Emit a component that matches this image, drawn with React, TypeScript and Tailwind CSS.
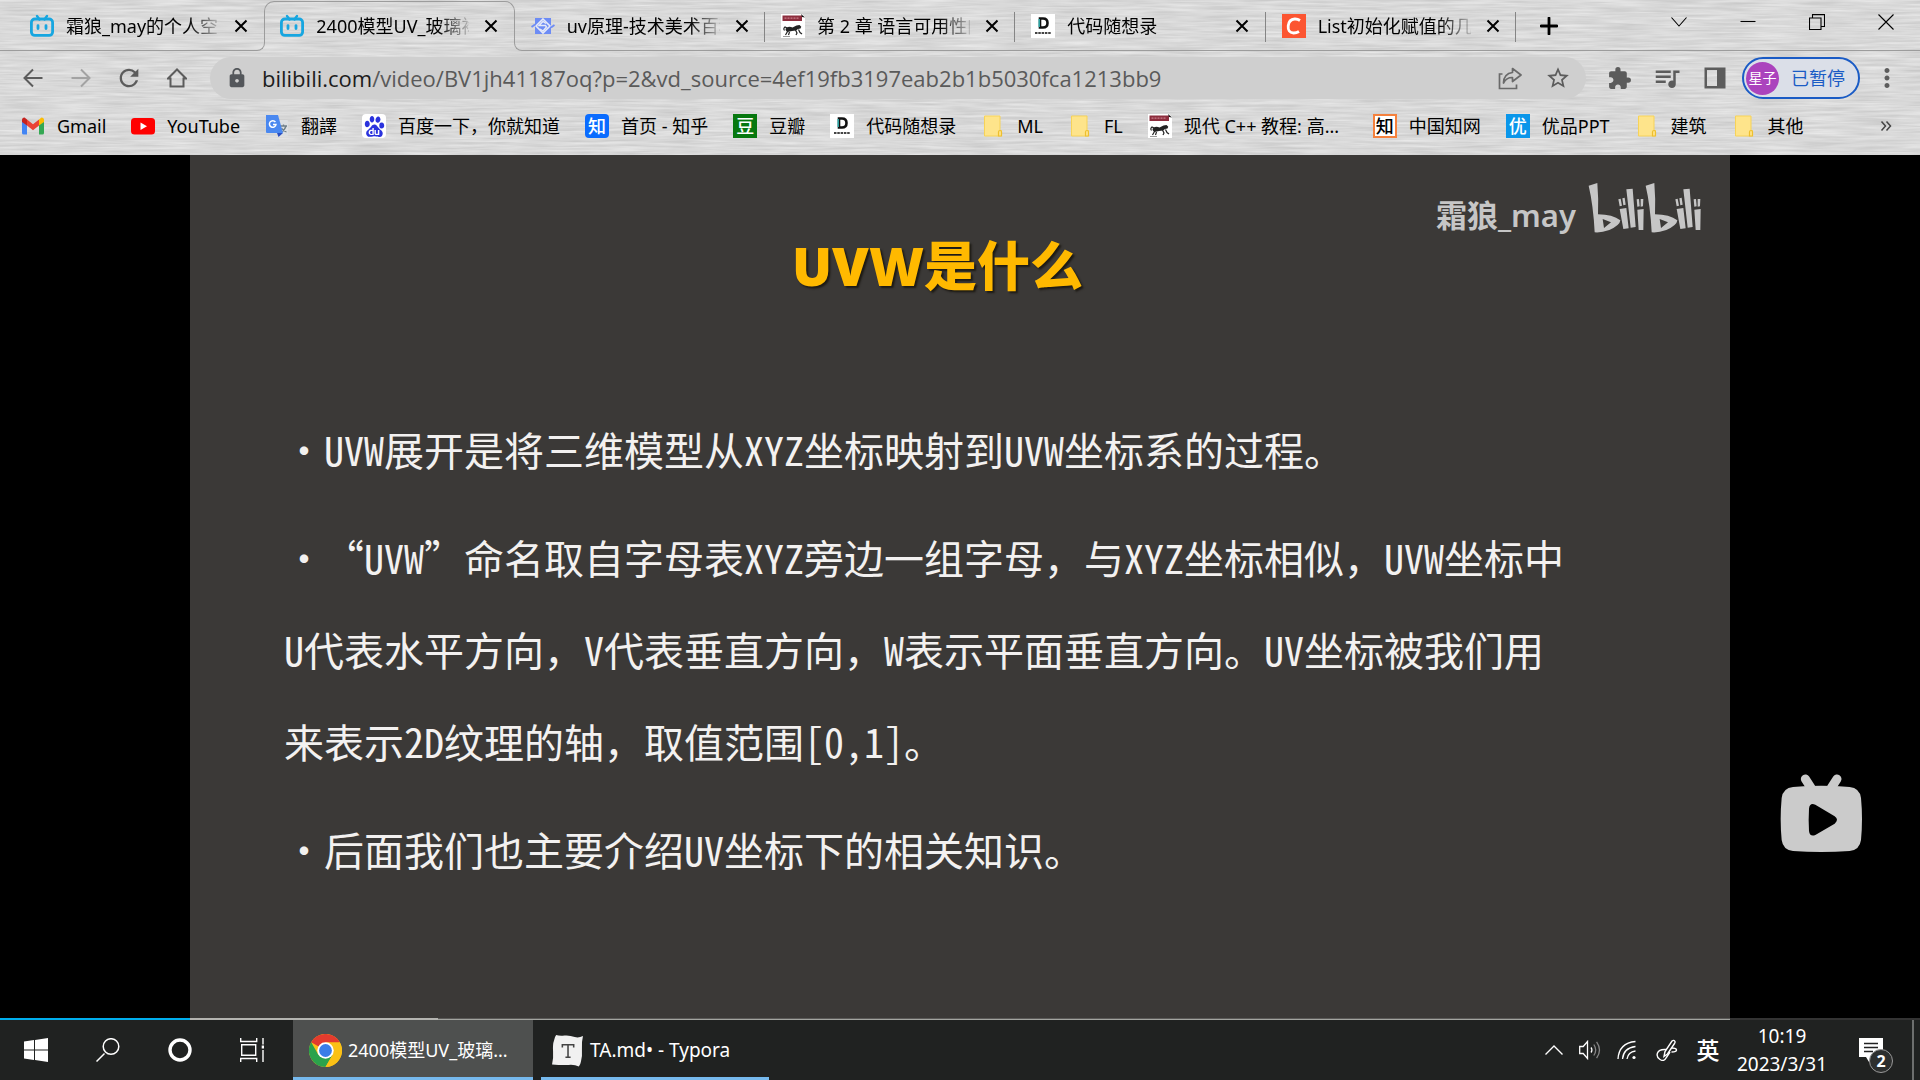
import React from "react";
import type { ReactNode } from "react";
import { MdExtension, MdLock, MdMoreVert, MdQueueMusic, MdRefresh, MdStarBorder } from "react-icons/md";
import { SiBaidu } from "react-icons/si";

function BiliIcon() {
  return (
    <svg viewBox="0 0 24 24" className="h-6 w-6">
      <path d="M7 2l2.5 3.5M17 2l-2.5 3.5" stroke="#17a6e0" strokeWidth="2.4" strokeLinecap="round" />
      <rect x="1.4" y="5" width="21.2" height="16.4" rx="3.4" fill="none" stroke="#17a6e0" strokeWidth="2.8" />
      <path d="M8 11.6v3M16 11.6v3" stroke="#17a6e0" strokeWidth="2.8" strokeLinecap="round" />
    </svg>
  );
}

function UvIcon() {
  return (
    <svg viewBox="0 0 24 24" className="h-6 w-6">
      <path d="M4 4h16v16H4z" fill="#6d8cf5" />
      <path d="M12 5l7 7-7 7-7-7z" fill="none" stroke="#e6eaf8" strokeWidth="1.600" />
      <path d="M15 9.500l-3-2-4 4h6.500l1 1.500-3.500 4-3-2" fill="none" stroke="#e6eaf8" strokeWidth="1.400" />
      <path d="M.5 13l3.500-2.500M20 13.500l3.500-2.500" stroke="#6d8cf5" strokeWidth="1.800" />
    </svg>
  );
}

function MonkeyIcon() {
  return (
    <svg viewBox="0 0 24 24" className="h-6 w-6">
      <path d="M0 0h21l3 3v21H0z" fill="#fff" />
      <path d="M1.500 1.500h19.500v5.500h-19.500z" fill="#8d2d3d" />
      <path d="M3.500 4.200h15" stroke="#c9808c" strokeWidth="1.300" strokeDasharray="2 1" />
      <path d="M20 0l4 3.500-3-.6z" fill="#111" />
      <path
        d="M4.500 21l2-3.500-1.500-3M7.500 21l1-3M3.500 16.500q-1.500-2 .5-3.500l2 1M14.500 16l1.500 3-1 2M17.500 15.500l1.500 3 2 1.500"
        fill="none"
        stroke="#222"
        strokeWidth="1.200"
      />
      <path d="M5.500 13.500q3-1.500 6 0l4-2 3-.5 1.800 1.800-.8 1.800-2.500.4-2 1.500-4 .6-4.500 1-2-2z" fill="#222" />
      <path d="M2 22.500h7" stroke="#999" strokeWidth="1" />
    </svg>
  );
}

function DIcon() {
  return (
    <span className="block h-6 w-6 bg-white">
      <svg viewBox="0 0 24 24" className="h-6 w-6">
        <path d="M9 4.500h3q4.500 0 4.500 4.500t-4.500 4.500H9z" fill="none" stroke="#111" strokeWidth="2.600" />
        <path d="M8.200 5v8" stroke="#2fb4b4" strokeWidth="1.400" />
        <path d="M4 19h16" stroke="#444" strokeWidth="2.200" strokeDasharray="2.500 .8" />
      </svg>
    </span>
  );
}

function CIcon() {
  return (
    <svg viewBox="0 0 24 24" className="h-6 w-6">
      <path d="M0 0h24v24H0z" fill="#fc5531" />
      <path d="M18 6.500Q15.500 4.800 12.600 5 6.800 5.500 6.200 12t5.400 7q3 0 5.400-1.500" fill="none" stroke="#fff" strokeWidth="2.800" />
    </svg>
  );
}

function GmailIcon() {
  return (
    <svg viewBox="0 0 24 24" className="h-6 w-6">
      <path d="M1 7v12q0 1.500 1.500 1.500H6V10z" fill="#4285f4" />
      <path d="M23 7v12q0 1.500-1.500 1.500H18V10z" fill="#34a853" />
      <path d="M6 5.500l6 4.800 6-4.800v6l-6 4.800-6-4.800z" fill="#ea4335" />
      <path d="M1 8V6q0-2.500 2.500-2.500L6 5.500v6z" fill="#c5221f" />
      <path d="M23 8V6q0-2.500-2.500-2.500L18 5.500v6z" fill="#fbbc04" />
    </svg>
  );
}

function YouTubeIcon() {
  return (
    <svg viewBox="0 0 24 24" className="h-6 w-6">
      <rect x="0" y="4" width="24" height="16.500" rx="3.500" fill="#f00" />
      <path d="M9.500 8.500v7.500l6.500-3.750z" fill="#fff" />
    </svg>
  );
}

function TranslateIcon() {
  return (
    <svg viewBox="0 0 24 24" className="h-6 w-6">
      <path d="M9 6h13q1 0 1 1v14q0 1-1 1H13z" fill="#dcdfe2" />
      <path d="M15 12h7M18.500 10.500V12M21 12q-1 4-5 6M16.500 14q1.500 3 5 4" fill="none" stroke="#6f7f88" strokeWidth="1.300" />
      <path d="M1 1h12l5 18H2q-1 0-1-1z" fill="#4a88f0" />
      <path d="M12 19h6l-4.500 4z" fill="#2a4fc0" />
      <path d="M10.400 8A3.300 3.300 0 1 0 11 10.500H8" fill="none" stroke="#fff" strokeWidth="1.500" />
    </svg>
  );
}

function BaiduIcon() {
  return (
    <span className="flex h-6 w-6 items-center justify-center rounded-sm bg-white">
      <SiBaidu className="h-[21px] w-[21px] text-[#2a32dd]" />
    </span>
  );
}

function FolderIcon() {
  return (
    <svg viewBox="0 0 24 24" className="h-6 w-6">
      <path d="M3.500 2h15.500v14.500h1.500v4.500q0 1-1 1h-16z" fill="#fee48b" stroke="#f7d358" strokeWidth="1" />
      <path d="M17.500 22v-4q0-1.500 1.500-1.500t1.500 1.500v4z" fill="#fee48b" stroke="#eebf2e" strokeWidth="1.200" />
    </svg>
  );
}

function GlyphIcon({ char, tone }: { char: string; tone: string }) {
  return <span className={`flex h-6 w-6 items-center justify-center text-lg leading-6 font-medium ${tone}`}>{char}</span>;
}

function ChromeIcon() {
  return (
    <svg viewBox="0 0 48 48" className="h-[33px] w-[33px] shrink-0">
      <circle cx="24" cy="24" r="24" fill="#fbc116" />
      <path d="M24 24L3.200 12A24 24 0 0 1 44.800 12z" fill="#e33b2e" />
      <path d="M3.200 12A24 24 0 0 0 24 48L34.400 30 24 24 13.600 30z" fill="#2ba24c" />
      <path d="M24 12h20.800A24 24 0 0 1 24 48l10.400-18z" fill="#fbc116" />
      <circle cx="24" cy="24" r="12" fill="#fff" />
      <circle cx="24" cy="24" r="9.300" fill="#3a7de8" />
    </svg>
  );
}

function TyporaIcon() {
  return (
    <svg viewBox="0 0 32 32" className="h-[33px] w-[33px] shrink-0">
      <path d="M5 1q3 1 8 .5t10 1.500q4 1 8-1-1.500 6-1 13t-1 12q-.5 3-2 4.500-4-2-10-1.500T1 29.500Q2.500 24 2 17t1-11q.5-3 2-5z" fill="#f1f1f1" />
      <path d="M11 13V10.500h11V13M16.500 10.500v12M14 22.500h5" fill="none" stroke="#444" strokeWidth="1.500" />
    </svg>
  );
}

type Tab = { title: string; icon: ReactNode; active?: boolean; line: string; sep: boolean };

const tabs: Tab[] = [
  { title: "霜狼_may的个人空间", icon: <BiliIcon />, line: "left-0 right-2", sep: false },
  { title: "2400模型UV_玻璃裙子", icon: <BiliIcon />, active: true, line: "", sep: false },
  { title: "uv原理-技术美术百科", icon: <UvIcon />, line: "left-2 right-0", sep: true },
  { title: "第 2 章 语言可用性的强化", icon: <MonkeyIcon />, line: "inset-x-0", sep: true },
  { title: "代码随想录", icon: <DIcon />, line: "inset-x-0", sep: true },
  { title: "List初始化赋值的几种", icon: <CIcon />, line: "inset-x-0", sep: true },
];

const bookmarks: { label: string; icon: ReactNode }[] = [
  { label: "Gmail", icon: <GmailIcon /> },
  { label: "YouTube", icon: <YouTubeIcon /> },
  { label: "翻譯", icon: <TranslateIcon /> },
  { label: "百度一下，你就知道", icon: <BaiduIcon /> },
  { label: "首页 - 知乎", icon: <GlyphIcon char="知" tone="rounded-sm bg-[#0a6cff] text-white" /> },
  { label: "豆瓣", icon: <GlyphIcon char="豆" tone="bg-[#07780f] text-white" /> },
  { label: "代码随想录", icon: <DIcon /> },
  { label: "ML", icon: <FolderIcon /> },
  { label: "FL", icon: <FolderIcon /> },
  { label: "现代 C++ 教程: 高...", icon: <MonkeyIcon /> },
  { label: "中国知网", icon: <GlyphIcon char="知" tone="border-2 border-[#f5813d] bg-white font-black text-black" /> },
  { label: "优品PPT", icon: <GlyphIcon char="优" tone="bg-[#0a96ea] text-white" /> },
  { label: "建筑", icon: <FolderIcon /> },
  { label: "其他", icon: <FolderIcon /> },
];

function BrowserTab({ tab }: { tab: Tab }) {
  return (
    <div className="relative flex min-w-0 flex-1 items-center pl-4">
      {tab.active ? (
        <>
          <div className="absolute inset-x-0 top-px bottom-2 rounded-t-[10px] border-x border-t border-[#9c9c9c]" />
          <div className="absolute bottom-0 -left-2 h-2 w-[9px] rounded-br-lg border-r border-b border-[#9c9c9c]" />
          <div className="absolute -right-2 bottom-0 h-2 w-[9px] rounded-bl-lg border-b border-l border-[#9c9c9c]" />
        </>
      ) : (
        <div className={`absolute bottom-0 border-b border-[#9c9c9c] ${tab.line}`} />
      )}
      <span className="shrink-0">{tab.icon}</span>
      <span className="ml-3 w-[153px] overflow-hidden whitespace-nowrap [mask-image:linear-gradient(to_right,black_122px,transparent_158px)]">
        {tab.title}
      </span>
      <button aria-label="关闭标签页" className="ml-3.5 flex h-6 w-4 items-center justify-center">
        <svg viewBox="0 0 14 14" className="h-3.5 w-3.5 shrink-0">
          <path d="M1.500 1.500l11 11M12.500 1.500l-11 11" stroke="#000" strokeWidth="2" />
        </svg>
      </button>
      {tab.sep && <div className="absolute top-3 right-0 h-[30px] w-px bg-[#858585]" />}
    </div>
  );
}

function WindowButton({ label, d }: { label: string; d: string }) {
  return (
    <button aria-label={label} className="flex h-[44px] w-[69px] items-center justify-center">
      <svg viewBox="0 0 16 16" className="h-4 w-4">
        <path d={d} fill="none" stroke="#000" strokeWidth="1.100" />
      </svg>
    </button>
  );
}

function ToolButton({ label, children }: { label: string; children: ReactNode }) {
  return (
    <button aria-label={label} className="flex h-10 w-12 shrink-0 items-center justify-center text-[#5c5c5c]">
      {children}
    </button>
  );
}

function BrowserChrome() {
  return (
    <header className="relative shrink-0 overflow-hidden bg-[#d9d9d9] text-lg text-black">
      <svg className="absolute inset-0 h-full w-full" aria-hidden="true">
        <filter id="brushed" x="0" y="0" width="100%" height="100%" colorInterpolationFilters="sRGB">
          <feTurbulence type="fractalNoise" baseFrequency="0.02 0.4" numOctaves="3" seed="4" />
          <feColorMatrix values="0.16 0 0 0 0.77  0.16 0 0 0 0.77  0.16 0 0 0 0.77  0 0 0 0 1" />
        </filter>
        <rect width="100%" height="100%" filter="url(#brushed)" />
      </svg>
      <div className="relative">
        <div className="flex h-[51px]">
          <div className="w-3.5 shrink-0 border-b border-[#9c9c9c]" />
          <nav className="flex w-[1502px] min-w-0">
            {tabs.map((t) => (
              <BrowserTab key={t.title} tab={t} />
            ))}
          </nav>
          <div className="flex flex-1 items-start justify-between border-b border-[#9c9c9c]">
            <button aria-label="新标签页" className="mt-2 flex h-9 w-[66px] items-center justify-center">
              <svg viewBox="0 0 18 18" className="h-[18px] w-[18px]">
                <path d="M9 1v16M1 9h16" stroke="#000" strokeWidth="2.800" strokeLinecap="round" />
              </svg>
            </button>
            <div className="flex">
              <WindowButton label="搜索标签页" d="M.5 3.500L8 12l7.500-8.500" />
              <WindowButton label="最小化" d="M.5 7.500h15" />
              <WindowButton label="还原" d="M.5 4h11.500v11.500H.5zM3.500 4V.6h12v11.900H12" />
              <WindowButton label="关闭" d="M.5.5l15 15M15.500.5l-15 15" />
            </div>
          </div>
        </div>

        <div className="flex h-[54px] items-center px-[9px]">
          <ToolButton label="后退">
            <svg viewBox="0 0 20 20" className="h-5 w-5">
              <path d="M19.500 10H1.500M10 1.500L1.500 10l8.500 8.500" fill="none" stroke="#5c5c5c" strokeWidth="2" />
            </svg>
          </ToolButton>
          <ToolButton label="前进">
            <svg viewBox="0 0 20 20" className="h-5 w-5">
              <path d="M.5 10h18M10 1.500l8.500 8.500-8.500 8.500" fill="none" stroke="#a3a3a3" strokeWidth="2" />
            </svg>
          </ToolButton>
          <ToolButton label="重新加载">
            <MdRefresh className="h-7 w-7" />
          </ToolButton>
          <ToolButton label="主页">
            <svg viewBox="0 0 20 20" className="h-5 w-5">
              <path d="M1 10.500L10 1.500l9 9h-2.500v8h-13v-8z" fill="none" stroke="#5c5c5c" strokeWidth="2" />
            </svg>
          </ToolButton>
          <div className="mx-[9px] flex h-[42px] flex-1 items-center rounded-full bg-[#cfcfcf] pr-1 pl-4">
            <MdLock className="h-[22px] w-[22px] text-[#54575b]" />
            <a href="#video" className="ml-3.5 flex-1 font-['Open_Sans',sans-serif] text-[22px] leading-8 text-[#5a5a5a]">
              <span className="text-[#1c1c1c]">bilibili.com</span>/video/BV1jh41187oq?p=2&amp;vd_source=4ef19fb3197eab2b1b5030fca1213bb9
            </a>
            <ToolButton label="分享">
              <svg viewBox="0 0 24 24" className="h-6 w-6">
                <path d="M4.500 8H1.500v14.500h17v-4" fill="none" stroke="#6a6a6a" strokeWidth="1.700" />
                <path d="M14.500 2.500L23 9l-8.500 6.500v-4q-6-.2-9 5.500.3-9.500 9-10.500z" fill="none" stroke="#6a6a6a" strokeWidth="1.700" strokeLinejoin="round" />
              </svg>
            </ToolButton>
            <ToolButton label="收藏">
              <MdStarBorder className="h-[26px] w-[26px]" />
            </ToolButton>
          </div>
          <ToolButton label="扩展程序">
            <MdExtension className="h-[25px] w-[25px]" />
          </ToolButton>
          <ToolButton label="媒体控件">
            <MdQueueMusic className="h-[30px] w-[30px]" />
          </ToolButton>
          <ToolButton label="侧边栏">
            <svg viewBox="0 0 22 22" className="h-[22px] w-[22px]">
              <path d="M.5 .5h21v21H.5zM3 3v16h10V3z" fill="#5c5c5c" fillRule="evenodd" />
            </svg>
          </ToolButton>
          <button className="ml-[3px] flex h-[42px] w-[118px] items-center rounded-full border-2 border-[#1a5bc5] bg-[#dbdfe8] pl-0.5 text-[#1a5bc5]">
            <span className="flex h-[33px] w-[33px] items-center justify-center rounded-full bg-[#ab43bd] text-sm text-white">星子</span>
            <span className="ml-3">已暂停</span>
          </button>
          <div className="ml-[3px]">
            <ToolButton label="菜单">
              <MdMoreVert className="h-[30px] w-[30px]" />
            </ToolButton>
          </div>
        </div>

        <nav className="flex h-[50px] items-center gap-[25px] pr-7 pb-2 pl-[21px] leading-6">
          {bookmarks.map((b, i) => (
            <a key={i} href="#bookmark" className="flex items-center gap-3 whitespace-nowrap">
              {b.icon}
              <span className={b.label.startsWith("现代") ? "min-w-[164px]" : ""}>{b.label}</span>
            </a>
          ))}
          <button aria-label="更多书签" className="ml-auto">
            <svg viewBox="0 0 12 12" className="h-3 w-3">
              <path d="M1.500 1.500L5.500 6l-4 4.500M6.500 1.500l4 4.500-4 4.500" fill="none" stroke="#444" strokeWidth="1.500" />
            </svg>
          </button>
        </nav>
      </div>
    </header>
  );
}

function LogoSyllable({ x }: { x: number }) {
  return (
    <g transform={`translate(${x} 0)`}>
      <path
        fillRule="evenodd"
        d="M628 80L654 72Q658 120 656 166Q700 166 723 184Q722 199 690 213Q665 222 646 220Q642 140 628 80zM670 180L695 190 674 207z"
      />
      <path d="M721 150l20-3 7 61-16 2zM741 91l19-2 9 115-15 2zM774 152l19-2-1 63h-14z" />
      <path d="M717 121l7-2 4 21-7 2zM729 118l7-2 3 21-7 2zM772 121l7-1 2 22-7 1zM784 120h8l-1 22-7 1z" />
    </g>
  );
}

function Watermark() {
  return (
    <div className="flex items-start justify-end pt-6 pr-6 text-[#c6c6c6]">
      <span className="pt-4 text-[31px] leading-10 font-semibold">霜狼_may</span>
      <svg viewBox="620 60 360 171" className="ml-2.5 h-[57px] w-[120px] fill-current">
        <LogoSyllable x={0} />
        <LogoSyllable x={171} />
      </svg>
    </div>
  );
}

function Slide() {
  return (
    <article className="flex-1 bg-[#3b3937]">
      <Watermark />
      <h1 className="mt-0.5 pl-[602px] text-[53px] leading-[56px] font-black text-[#ffb900] [text-shadow:2px_2px_2px_#1d1a14]">
        UVW是什么
      </h1>
      <div
        lang="zh-CN"
        className="mt-[109px] space-y-4 pl-[94px] font-['Noto_Sans_Mono_CJK_SC','Noto_Sans_CJK_SC',monospace] text-[40px] leading-[92px] whitespace-nowrap text-[#f3f1f0] [text-spacing-trim:space-all]"
      >
        <p>·UVW展开是将三维模型从XYZ坐标映射到UVW坐标系的过程。</p>
        <p>
          ·“UVW”命名取自字母表XYZ旁边一组字母，与XYZ坐标相似，UVW坐标中
          <br />
          U代表水平方向，V代表垂直方向，W表示平面垂直方向。UV坐标被我们用
          <br />
          来表示2D纹理的轴，取值范围[0,1]。
        </p>
        <p>·后面我们也主要介绍UV坐标下的相关知识。</p>
      </div>
    </article>
  );
}

function VideoPage() {
  return (
    <main className="flex flex-1 flex-col bg-black">
      <div className="flex flex-1">
        <div className="w-[190px] shrink-0" />
        <Slide />
        <aside className="flex w-[190px] shrink-0 items-end justify-center pr-2 pb-[164px]">
          <button aria-label="播放">
            <svg viewBox="110 95 264 246" className="block h-[82px] w-[88px]">
              <path d="M195 116l17 26M290 116l-17 26" stroke="#cbcbcb" strokeWidth="27" strokeLinecap="round" />
              <path
                fill="#cbcbcb"
                fillRule="evenodd"
                d="M158 140Q243 132 328 140Q358 143 362 173Q368 236 362 299Q358 329 328 332Q243 338 158 332Q128 329 124 299Q118 236 124 173Q128 143 158 140zM206 205Q208 186 225 193L283 228Q297 238 283 250L225 284Q208 290 206 272Q204 238 206 205z"
              />
            </svg>
          </button>
        </aside>
      </div>
      <div className="flex h-0.5">
        <div className="w-[190px] bg-[#00aeec]" />
        <div className="w-[248px] bg-[#b4b4b0]" />
        <div className="flex-1 border-t border-[#5b5a58] bg-[#a3a5a0]" />
        <div className="w-[190px] bg-[#333]" />
      </div>
    </main>
  );
}

function TaskButton({ label, children }: { label: string; children: ReactNode }) {
  return (
    <button aria-label={label} className="flex h-full w-[72px] items-center justify-center">
      {children}
    </button>
  );
}

function Taskbar() {
  return (
    <footer className="flex h-[60px] shrink-0 items-stretch bg-[#202221] text-[19px] text-white">
      <TaskButton label="开始">
        <svg viewBox="0 0 24 24" className="h-6 w-6 fill-white">
          <path d="M0 3.500l10-1.400v9.400H0zM11 2L24 0v11.500H11zM0 12.500h10v9.400L0 20.500zM11 12.500h13V24l-13-2z" />
        </svg>
      </TaskButton>
      <TaskButton label="搜索">
        <svg viewBox="0 0 24 24" className="h-6 w-6">
          <path d="M8.500 15.500L.5 23.500" stroke="#fff" strokeWidth="1.500" />
          <circle cx="15" cy="8.500" r="7.800" fill="none" stroke="#fff" strokeWidth="1.500" />
        </svg>
      </TaskButton>
      <TaskButton label="Cortana">
        <svg viewBox="0 0 24 24" className="h-6 w-6">
          <circle cx="12" cy="12" r="10" fill="none" stroke="#fff" strokeWidth="3.400" />
        </svg>
      </TaskButton>
      <TaskButton label="任务视图">
        <svg viewBox="0 0 24 24" className="h-6 w-6" fill="none" stroke="#fff" strokeWidth="1.400">
          <path d="M.7 0v3.500h16V0M.7 24v-3.500h16V24M1.700 6.700h14v10.600h-14zM23 0v6.500M23 12v12" />
          <path d="M23 7.500v3" strokeWidth="2.600" />
        </svg>
      </TaskButton>
      <button className="ml-[5px] flex w-[240px] items-center gap-1.5 bg-[#4e504f] pl-4 text-lg whitespace-nowrap shadow-[inset_0_-3px_0_#76b9ed]">
        <ChromeIcon />
        2400模型UV_玻璃...
      </button>
      <button className="ml-2 flex w-[228px] items-center gap-1.5 pl-2.5 whitespace-nowrap shadow-[inset_0_-3px_0_#76b9ed]">
        <TyporaIcon />
        TA.md• - Typora
      </button>
      <div className="ml-auto flex items-center pr-1.5">
        <button aria-label="显示隐藏的图标" className="flex w-9 justify-center">
          <svg viewBox="0 0 18 10" className="h-2.5 w-[18px]">
            <path d="M.5 9.500L9 1l8.500 8.500" fill="none" stroke="#fff" strokeWidth="1.400" />
          </svg>
        </button>
        <button aria-label="音量" className="flex w-9 justify-center">
          <svg viewBox="0 0 22 20" className="h-5 w-[22px]" fill="none" stroke="#fff" strokeWidth="1.300">
            <path d="M.7 6.500h3.500L8.500 1.500v17l-4.300-5H.7zM12 7.500q1.800 2.500 0 5" />
            <path d="M14.800 4.500q3.800 5.500 0 11M17.600 1.800q5.800 8.200 0 16.400" stroke="#858585" />
          </svg>
        </button>
        <button aria-label="网络" className="flex w-[38px] justify-center">
          <svg viewBox="0 0 20 20" className="h-5 w-5" fill="none" stroke="#fff" strokeWidth="1.300">
            <path d="M1 19Q2 3 18.500 1.500M5.500 19Q6.500 8 18.500 6.500M10 19q1-7 8.500-8" />
            <circle cx="17" cy="17.500" r="1.600" fill="#fff" stroke="none" />
          </svg>
        </button>
        <button aria-label="笔" className="flex w-[42px] justify-center">
          <svg viewBox="0 0 22 22" className="h-[22px] w-[22px]" fill="none" stroke="#fff" strokeWidth="1.400">
            <path d="M8 17.500l1-5L16 2q2-1.500 3 .5.300 1-.5 2L11.500 15z" />
            <path d="M10 10.500Q3 10 1.500 14T4 20.500t6-1.500l4-6M15.500 9q5 0 5 2t-5 2" />
          </svg>
        </button>
        <button className="w-10 text-[23px] leading-7 font-medium">英</button>
        <button className="w-[108px] text-center leading-7">
          <span className="block">10:19</span>
          <span className="block">2023/3/31</span>
        </button>
        <button aria-label="通知" className="relative flex h-[60px] w-[70px] items-center justify-center">
          <svg viewBox="0 0 24 24" className="h-6 w-6">
            <path d="M0 0h24v19H14l-4 5-3-5H0z" fill="#fff" />
            <path d="M5 5.500h14M5 9.500h14M5 13.500h9" stroke="#222" strokeWidth="1.300" />
          </svg>
          <span className="absolute top-[41px] left-[45px] flex h-6 w-6 -translate-x-1/2 -translate-y-1/2 items-center justify-center rounded-full border border-[#999] bg-[#2d2f2e] text-base font-bold">
            2
          </span>
        </button>
        <div className="ml-1.5 h-[60px] w-0.5 bg-[#6d6f6e]" />
      </div>
    </footer>
  );
}

export default function App() {
  return (
    <div lang="zh-CN" className="flex min-h-screen flex-col bg-black font-['Noto_Sans','Noto_Sans_CJK_SC',sans-serif]">
      <BrowserChrome />
      <VideoPage />
      <Taskbar />
    </div>
  );
}
